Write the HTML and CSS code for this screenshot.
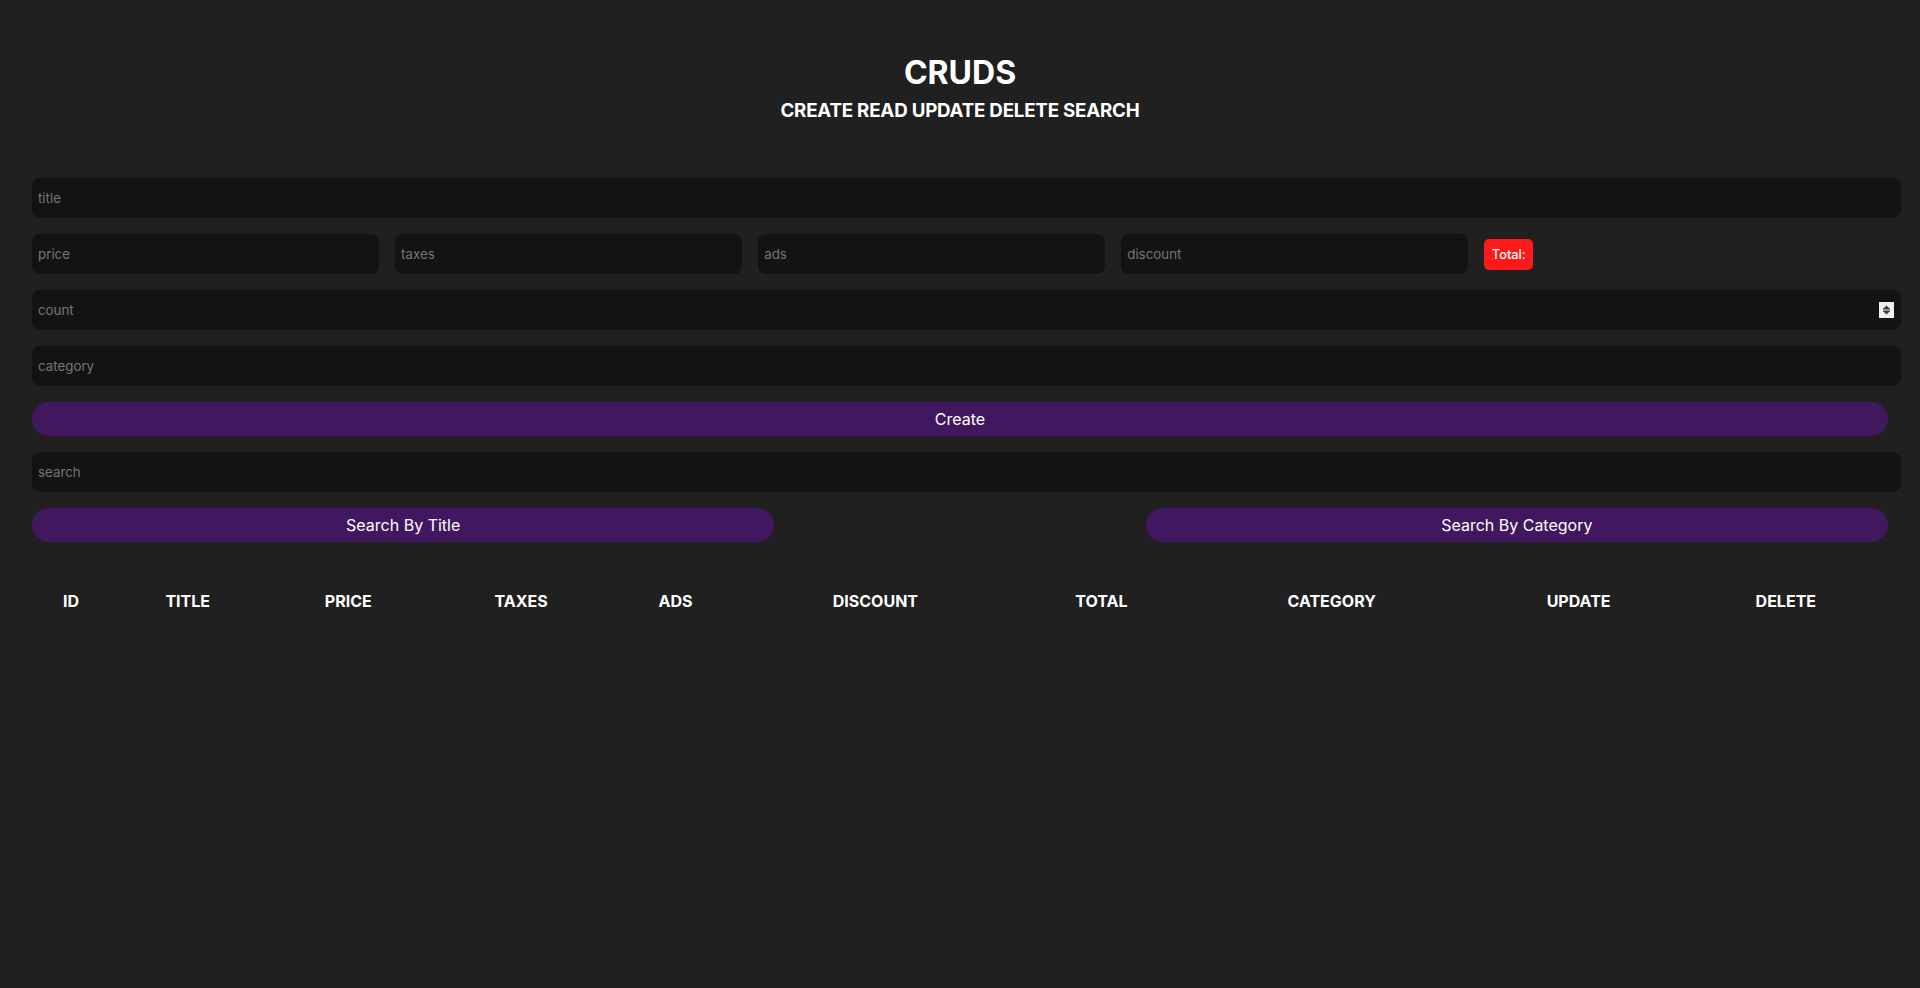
FILE: index.html
```html
<!DOCTYPE html>
<html lang="en">
<head>
<meta charset="utf-8">
<title>CRUDS</title>
<link rel="stylesheet" href="styles.css">
</head>
<body>
<div class="crud">
  <header class="head">
    <h1 class="head-title">CRUDS</h1>
    <p class="head-sub">CREATE READ UPDATE DELETE SEARCH</p>
  </header>

  <div class="inputs">
    <input class="field" type="text" placeholder="title">
    <div class="price">
      <input class="field field-price" type="text" placeholder="price">
      <input class="field field-price" type="text" placeholder="taxes">
      <input class="field field-price" type="text" placeholder="ads">
      <input class="field field-price" type="text" placeholder="discount">
      <small class="total">Total:</small>
    </div>
    <div class="count-wrap">
      <input class="field" type="text" placeholder="count">
      <span class="spin" aria-hidden="true">
        <svg width="15" height="16" viewBox="0 0 15 16">
          <rect width="15" height="16" fill="#efefef"/>
          <path d="M4 7 L7.5 3.5 L11 7 Z" fill="#3b3b3b"/>
          <path d="M4 9 L11 9 L7.5 12.5 Z" fill="#3b3b3b"/>
          <rect x="4" y="6.5" width="7" height="1" fill="#3b3b3b"/>
          <rect x="4" y="8.5" width="7" height="1" fill="#3b3b3b"/>
        </svg>
      </span>
    </div>
    <input class="field" type="text" placeholder="category">
    <button class="btn">Create</button>
  </div>

  <div class="outputs">
    <input class="field" type="text" placeholder="search">
    <div class="btn-search">
      <button class="btn btn-half">Search By Title</button>
      <button class="btn btn-half">Search By Category</button>
    </div>
  </div>

  <table class="table">
    <thead>
      <tr>
        <th>id</th>
        <th>title</th>
        <th>price</th>
        <th>taxes</th>
        <th>ads</th>
        <th>discount</th>
        <th>total</th>
        <th>category</th>
        <th>update</th>
        <th>delete</th>
      </tr>
    </thead>
    <tbody></tbody>
  </table>
</div>
</body>
</html>
```

FILE: styles.css
```css
* {
  box-sizing: border-box;
}

html, body {
  margin: 0;
  padding: 0;
}

body {
  background: #202020;
  color: #ffffff;
  font-family: Inter, "Noto Sans", "Liberation Sans", sans-serif;
  min-height: 988px;
}

.crud {
  padding: 54px 32px 0 32px;
}

.head {
  text-align: center;
}

.head-title {
  margin: 0;
  font-size: 32px;
  font-weight: 700;
  line-height: 38.75px;
}

.head-sub {
  margin: 7px 0 0 0;
  font-size: 18.72px;
  font-weight: 700;
  line-height: 22.67px;
  letter-spacing: -0.2px;
}

.inputs {
  margin-top: 56px;
  display: flex;
  flex-direction: column;
  gap: 16px;
}

.outputs {
  margin-top: 16px;
  display: flex;
  flex-direction: column;
  gap: 16px;
}

.field {
  display: block;
  width: calc(100% + 13px);
  height: 40px;
  margin: 0;
  padding: 0 7px 0 6px;
  border: none;
  outline: none;
  border-radius: 8px;
  background: #131313;
  color: #ffffff;
  font-family: Inter, "Noto Sans", "Liberation Sans", sans-serif;
  font-size: 13.33px;
}

.field::placeholder {
  color: #767676;
}

.price {
  display: flex;
  align-items: center;
  gap: 16px;
}

.field-price {
  width: calc(18% + 13px);
  flex: none;
}

.total {
  display: inline-block;
  background: #fe1a1a;
  color: #ffffff;
  font-size: 12.8px;
  font-weight: 500;
  line-height: 17px;
  padding: 7px 7.5px;
  border-radius: 5px;
  position: relative;
  top: 0.5px;
}

.count-wrap {
  position: relative;
}

.spin {
  position: absolute;
  top: 12px;
  right: -6px;
  width: 15px;
  height: 16px;
  display: block;
}

.spin svg {
  display: block;
}

.btn {
  display: block;
  width: 100%;
  height: 34px;
  margin: 0;
  border: none;
  border-radius: 20px;
  background: #41175f;
  color: #ffffff;
  font-family: Inter, "Noto Sans", "Liberation Sans", sans-serif;
  font-size: 16px;
  font-weight: 400;
  cursor: pointer;
}

.btn-search {
  display: flex;
  justify-content: space-between;
}

.btn-half {
  width: 40%;
}

.table {
  width: 100%;
  margin-top: 43px;
  text-align: center;
  border-spacing: 2px;
}

.table th {
  padding: 5px;
  font-size: 16px;
  font-weight: 700;
  text-transform: uppercase;
  line-height: 19.4px;
}
```
